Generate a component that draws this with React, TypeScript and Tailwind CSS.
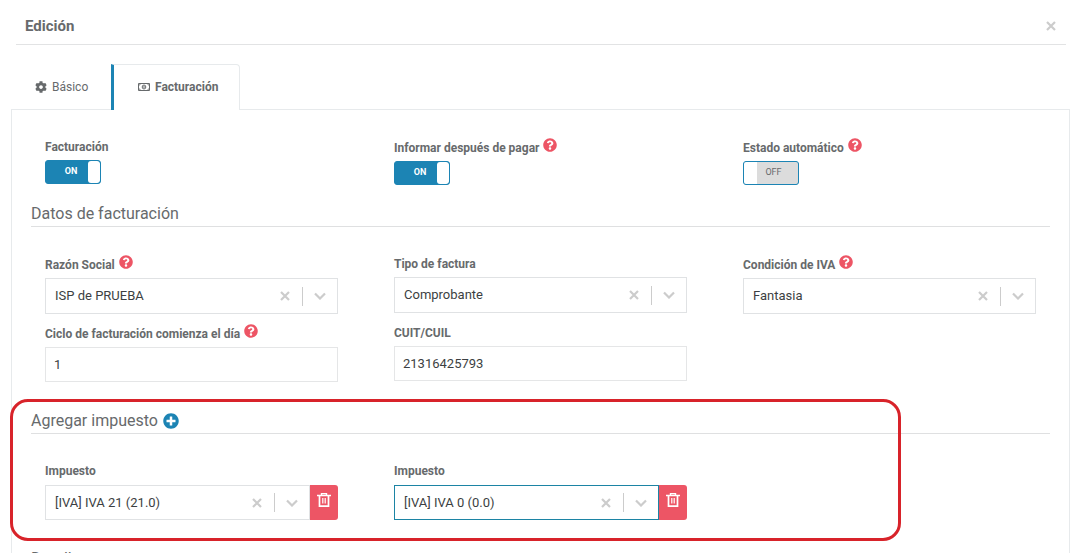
import { useState, type ReactNode } from 'react';
import { FaCog, FaPlusCircle, FaQuestionCircle } from 'react-icons/fa';

const companies = ['ISP de PRUEBA'];
const invoiceTypes = ['Comprobante'];
const vatConditions = ['Fantasia'];
const taxes = ['[IVA] IVA 21 (21.0)', '[IVA] IVA 0 (0.0)'];

function Label({ htmlFor, help, children }: { htmlFor: string; help?: boolean; children: ReactNode }) {
  return (
    <div className={help ? 'flex h-[19px] items-end gap-1' : 'flex h-[18px] items-end'}>
      <label htmlFor={htmlFor} className="text-xs leading-[18px] font-bold">{children}</label>
      {help && (
        <button type="button" aria-label="Ayuda" className="mb-[5px] text-[#ed5565]">
          <FaQuestionCircle className="size-[14px]" />
        </button>
      )}
    </div>
  );
}

function Toggle({ id, label, help, on }: { id: string; label: string; help?: boolean; on?: boolean }) {
  const [checked, setChecked] = useState(!!on);

  return (
    <div className="flex flex-col items-start gap-1">
      <Label htmlFor={id} help={help}>{label}</Label>
      <label className="flex h-6 w-14 cursor-pointer overflow-hidden rounded-[3px] border border-[#1c84b4] bg-[#1c84b4] text-[9px] leading-5">
        <input
          id={id}
          type="checkbox"
          className="sr-only"
          checked={checked}
          onChange={(e) => setChecked(e.target.checked)}
        />
        {checked ? (
          <>
            <span className="flex-1 pl-2 text-center font-bold text-white">ON</span>
            <span className="w-3 rounded-[3px] bg-white" />
          </>
        ) : (
          <>
            <span className="w-[13px] bg-white" />
            <span className="flex-1 bg-[#dcdcdc] pr-2 text-center text-[#676a6c]">OFF</span>
          </>
        )}
      </label>
    </div>
  );
}

function Select({ id, options, value, focused }: { id: string; options: string[]; value: string; focused?: boolean }) {
  const [current, setCurrent] = useState(value);

  return (
    <div className={`flex h-full min-w-0 flex-1 items-center border ${focused ? 'border-[#1c84a4]' : 'border-[#e0e2e4]'}`}>
      <select
        id={id}
        value={current}
        onChange={(e) => setCurrent(e.target.value)}
        className="min-w-0 flex-1 appearance-none bg-transparent pl-[9px] text-[13px] text-[#3c3f42] outline-none"
      >
        <option value=""></option>
        {options.map((option) => (
          <option key={option}>{option}</option>
        ))}
      </select>
      <button type="button" aria-label="Limpiar" onClick={() => setCurrent('')} className="px-3 text-[#cccccc]">
        <svg viewBox="0 0 10 10" className="size-[10px]" fill="none" stroke="currentColor" strokeWidth="2.2">
          <path d="M1 1l8 8M9 1l-8 8" />
        </svg>
      </button>
      <span className="h-[19px] w-px bg-[#cccccc]" />
      <svg viewBox="0 0 12 8" className="mx-[11px] h-2 w-3 text-[#cccccc]" fill="none" stroke="currentColor" strokeWidth="2.2">
        <path d="M1 1.500l5 5 5-5" />
      </svg>
    </div>
  );
}

function SelectField({ id, label, help, options, value }: { id: string; label: string; help?: boolean; options: string[]; value: string }) {
  return (
    <div className="flex flex-col gap-1">
      <Label htmlFor={id} help={help}>{label}</Label>
      <div className="h-9">
        <Select id={id} options={options} value={value} />
      </div>
    </div>
  );
}

function TextField({ id, label, help, value }: { id: string; label: string; help?: boolean; value: string }) {
  return (
    <div className="flex flex-col gap-1">
      <Label htmlFor={id} help={help}>{label}</Label>
      <input
        id={id}
        type="text"
        defaultValue={value}
        className="h-[35px] w-full border border-[#e5e6e7] px-2 text-[13px] text-[#3c3f42] outline-none"
      />
    </div>
  );
}

function TaxField({ id, value, focused }: { id: string; value: string; focused?: boolean }) {
  return (
    <div className="flex flex-col gap-[5px]">
      <Label htmlFor={id}>Impuesto</Label>
      <div className="flex h-[35px]">
        <Select id={id} options={taxes} value={value} focused={focused} />
        <button type="button" aria-label="Eliminar" className="flex w-7 justify-center rounded-r-[3px] bg-[#ed5565] pt-2 text-white">
          <svg viewBox="0 0 14 14" className="size-[14px]" fill="none" stroke="currentColor">
            <path d="M0 2.500h14M4.500 2V.6h5V2" strokeWidth="1.400" />
            <path d="M2.500 2.500v10.600h9V2.500" strokeWidth="1.700" />
            <path d="M5.800 5v5.500M8.200 5v5.500" strokeWidth="1.200" />
          </svg>
        </button>
      </div>
    </div>
  );
}

function SectionTitle({ children }: { children: ReactNode }) {
  return (
    <h2 className="mb-7 flex h-[25px] items-center gap-[5px] border-b border-[#dfe0e1] text-base leading-6">
      {children}
    </h2>
  );
}

const rowClass = 'grid grid-cols-3 gap-x-14 px-[14px]';

export default function App() {
  return (
    <div className="h-screen overflow-hidden bg-white font-['Roboto',sans-serif] text-[#676a6c]">
      <header className="mr-[22px] ml-4 flex h-[45px] items-center justify-between border-b border-[#e2e3e4] pt-2 pr-[10px] pl-[9px]">
        <h1 className="text-[15px] font-bold">Edición</h1>
        <button type="button" aria-label="Cerrar" className="text-[#cccccc]">
          <svg viewBox="0 0 10 10" className="size-[10px]" fill="none" stroke="currentColor" strokeWidth="2.200">
            <path d="M1 1l8 8M9 1l-8 8" />
          </svg>
        </button>
      </header>

      <div className="mt-[19px] mr-[18px] ml-[11px]">
        <nav className="-mb-px flex h-[46px] text-xs">
          <a href="#basico" className="flex w-[100px] items-center gap-[5px] pl-6">
            <FaCog className="size-3" />
            Básico
          </a>
          <a
            href="#facturacion"
            className="relative flex w-[129px] items-center gap-[5px] rounded-tr-[4px] border-t border-r border-l-3 border-t-[#e7eaec] border-r-[#e7eaec] border-l-[#1c84b4] bg-white pb-px pl-6 font-bold"
          >
            <svg viewBox="0 0 12 8" className="h-2 w-3" fill="none" stroke="currentColor">
              <path d="M.5.5h11v7H.5z" />
              <path d="M1.500 2.500v-1h1M9.500 1.500h1v1M10.500 5.500v1h-1M2.500 6.500h-1v-1" strokeWidth=".7" />
              <ellipse cx="6" cy="4" rx="1.800" ry="2" />
              <path d="M6 3v2" />
            </svg>
            Facturación
          </a>
        </nav>

        <main className="border border-[#e7eaec] pt-7 pr-[19px] pb-8 pl-[19px]">
          <div className={rowClass}>
            <Toggle id="invoicing" label="Facturación" on />
            <Toggle id="notify" label="Informar después de pagar" help on />
            <Toggle id="auto-status" label="Estado automático" help />
          </div>

          <section className="mt-[17px]">
            <SectionTitle>Datos de facturación</SectionTitle>
            <div className={rowClass}>
              <SelectField id="company" label="Razón Social" help options={companies} value="ISP de PRUEBA" />
              <SelectField id="invoice-type" label="Tipo de factura" options={invoiceTypes} value="Comprobante" />
              <SelectField id="vat" label="Condición de IVA" help options={vatConditions} value="Fantasia" />
            </div>
            <div className={`${rowClass} mt-[10px]`}>
              <TextField id="cycle" label="Ciclo de facturación comienza el día" help value="1" />
              <TextField id="cuit" label="CUIT/CUIL" value="21316425793" />
            </div>
          </section>

          <section className="relative mt-[27px]">
            <SectionTitle>
              Agregar impuesto
              <button type="button" aria-label="Agregar" className="text-[#1c84b4]">
                <FaPlusCircle className="size-4" />
              </button>
            </SectionTitle>
            <div className={rowClass}>
              <TaxField id="tax-1" value={taxes[0]} />
              <TaxField id="tax-2" value={taxes[1]} focused />
            </div>
            {/* Highlight frame */}
            <div className="pointer-events-none absolute -top-[10px] right-[149px] -bottom-[21px] -left-[21px] rounded-[18px] border-3 border-[#d8232a]" />
          </section>

          <section className="mt-[27px]">
            <SectionTitle>Detalle</SectionTitle>
          </section>
        </main>
      </div>
    </div>
  );
}
